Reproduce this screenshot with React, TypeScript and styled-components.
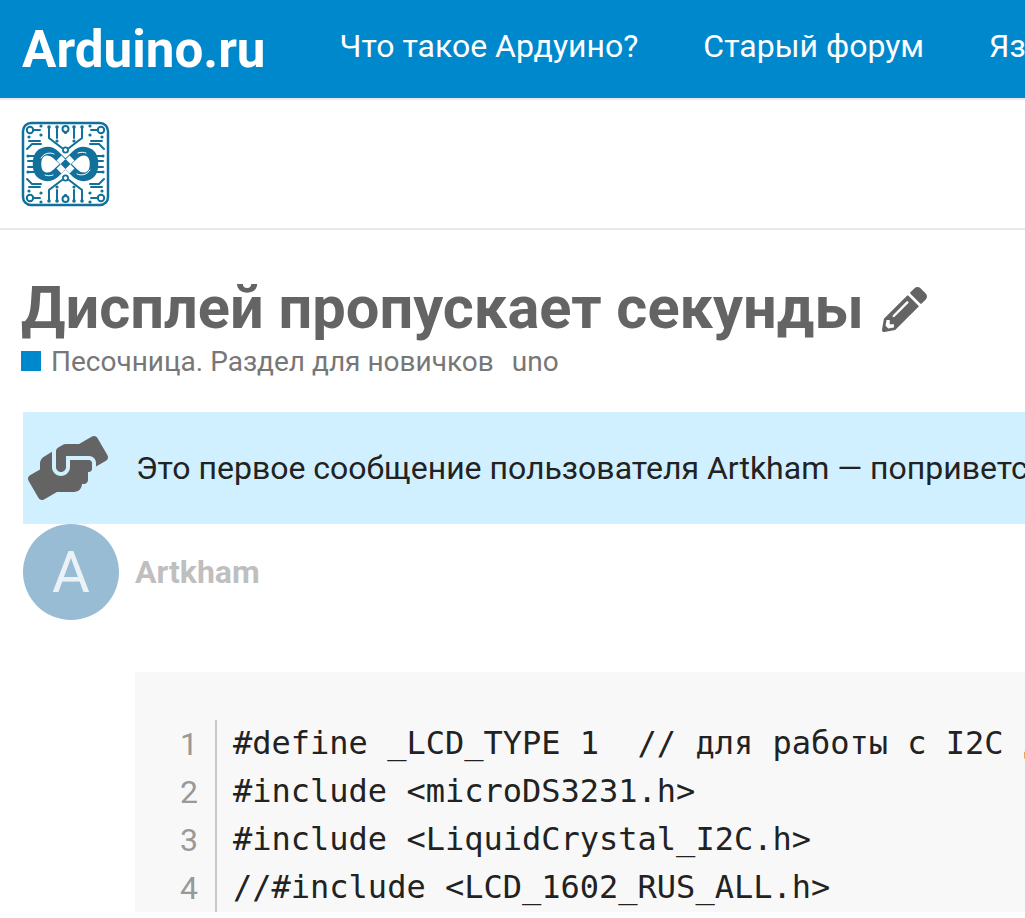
import styled, { createGlobalStyle } from 'styled-components';
import { FaHandsHelping, FaPencilAlt } from 'react-icons/fa';

const GlobalStyle = createGlobalStyle`
  html, body {
    margin: 0;
    padding: 0;
    background: #fff;
    overflow: hidden;
  }
  body {
    font-family: Roboto, "Liberation Sans", sans-serif;
  }
`;

const Page = styled.div`
  width: 1025px;
  height: 918px;
  overflow: hidden;
`;

const TopBar = styled.header`
  height: 98px;
  background: #0088cc;
  border-bottom: 2px solid #e9e9e9;
  display: flex;
  align-items: center;
  padding-left: 22px;
  white-space: nowrap;
  overflow: hidden;
`;

const Brand = styled.a`
  color: #fff;
  font-size: 51.2px;
  font-weight: 700;
  margin-right: 74px;
`;

const NavLink = styled.a`
  color: #fff;
  font-size: 32px;
  margin-right: 65px;
  position: relative;
  top: -3px;
`;

const LogoBar = styled.div`
  height: 128px;
  border-bottom: 2px solid #e9e9e9;
  display: flex;
  align-items: center;
  padding-left: 21px;
`;

const Content = styled.main`
  padding: 50px 0 0 21px;
`;

const Title = styled.h1`
  margin: 0;
  color: #646464;
  font-size: 59.6px;
  font-weight: 700;
  line-height: 56px;
  display: flex;
  align-items: center;
  gap: 18px;
  white-space: nowrap;

  svg {
    width: 45px;
    height: 45px;
    margin-top: 3px;
  }
`;

const Meta = styled.div`
  display: flex;
  align-items: center;
  margin-top: 10px;
  height: 30px;
  font-size: 28px;
  color: #777;
  white-space: nowrap;
`;

const CategoryBox = styled.span`
  width: 20px;
  height: 20px;
  background: #0088cc;
  margin-right: 10px;
`;

const Tag = styled.span`
  margin-left: 18px;
`;

const Notice = styled.div`
  margin: 36px 0 0 2px;
  height: 111px;
  background: #d1f0ff;
  border-bottom: 1px solid #e9e9e9;
  display: flex;
  align-items: center;
  color: #222;
  font-size: 32px;
  white-space: nowrap;
  overflow: hidden;

  svg {
    width: 80px;
    height: 64px;
    color: #646464;
    margin-left: 5px;
    margin-right: 28px;
    flex: none;
  }
`;

const Poster = styled.div`
  display: flex;
  align-items: center;
  margin-left: 2px;
  height: 96px;
`;

const Avatar = styled.div`
  width: 96px;
  height: 96px;
  border-radius: 50%;
  background: #97bcd4;
  color: #ebf2f7;
  font-size: 58px;
  display: flex;
  align-items: center;
  justify-content: center;
`;

const Username = styled.span`
  margin-left: 16px;
  color: #bfbfbf;
  font-size: 32px;
  font-weight: 700;
`;

const CodeBlock = styled.div`
  margin: 52px 0 0 114px;
  padding-top: 48px;
  background: #f8f8f8;
  display: grid;
  grid-template-columns: 82px 1fr;
  overflow: hidden;
`;

const Gutter = styled.div`
  border-right: 2px solid #c8c8c8;
  text-align: right;
  padding-right: 17px;
  color: #999;
  font-size: 32px;
  line-height: 48px;
`;

const Code = styled.pre`
  margin: 0;
  padding-left: 16px;
  color: #222;
  font-family: "DejaVu Sans Mono", "Liberation Mono", monospace;
  font-size: 32px;
  line-height: 48px;
  white-space: pre;
  position: relative;
  top: -1px;
`;

const lines = [
  '#define _LCD_TYPE 1  // для работы с I2C дисплеями',
  '#include <microDS3231.h>',
  '#include <LiquidCrystal_I2C.h>',
  '//#include <LCD_1602_RUS_ALL.h>',
];

// one quadrant of the circuit board, mirrored for the other three
const Quadrant = () => (
  <g>
    <circle cx="9" cy="9" r="3.2" strokeWidth="2" />
    <path d="M12 9 H19 M8 20 H19 M6 28 L11 23 H20 M7 35 H15 M7 40 H13 M28 6 V17 L41 27 M36 6 V17 M44 11 V12" strokeWidth="2" />
    <circle cx="20" cy="5" r="1.6" fill="#11719b" stroke="none" />
    <circle cx="20" cy="14" r="1.6" fill="#11719b" stroke="none" />
    <circle cx="8" cy="16" r="1.6" fill="#11719b" stroke="none" />
    <circle cx="28" cy="6" r="1.8" fill="#11719b" stroke="none" />
    <circle cx="36" cy="6" r="1.8" fill="#11719b" stroke="none" />
    <circle cx="36" cy="20" r="1.6" fill="#11719b" stroke="none" />
    <circle cx="7" cy="35" r="1.6" fill="#11719b" stroke="none" />
  </g>
);

const LogoIcon = () => (
  <svg width="90" height="86" viewBox="0 0 90 86" fill="none" stroke="#11719b" strokeLinecap="round">
    <rect x="2" y="2" width="85" height="82" rx="8" strokeWidth="2.5" />
    <Quadrant />
    <g transform="translate(89,0) scale(-1,1)">
      <Quadrant />
    </g>
    <g transform="translate(0,86) scale(1,-1)">
      <Quadrant />
    </g>
    <g transform="translate(89,86) scale(-1,-1)">
      <Quadrant />
    </g>
    <circle cx="44.5" cy="8" r="3" strokeWidth="2" />
    <circle cx="44.5" cy="78" r="3" strokeWidth="2" />
    <circle cx="44.5" cy="29" r="2.6" strokeWidth="1.8" />
    <circle cx="44.5" cy="57" r="2.6" strokeWidth="1.8" />
    <path
      d="M44.5 43 L35 34 C29 28 16 28 16 43 C16 58 29 58 35 52 L44.5 43 L54 34 C60 28 73 28 73 43 C73 58 60 58 54 52 Z"
      strokeWidth="8.5"
      strokeLinejoin="round"
    />
    <path d="M20 37 C23 32 29 31 33 33 M69 49 C66 54 60 55 56 53 M32 54 C29 55 26 55 24 54 M57 32 C60 31 63 31 65 32" stroke="#fff" strokeWidth="1" />
    <path d="M38 37 L51 50 M51 37 L38 50" stroke="#fff" strokeWidth="7" strokeLinecap="butt" />
    <path d="M44.5 38 L49.5 43 L44.5 48 L39.5 43 Z" fill="#11719b" stroke="none" />
  </svg>
);

const App = () => {
  return (
    <Page>
      <GlobalStyle />
      <TopBar>
        <Brand>Arduino.ru</Brand>
        <NavLink>Что такое Ардуино?</NavLink>
        <NavLink>Старый форум</NavLink>
        <NavLink>Язык</NavLink>
      </TopBar>
      <LogoBar>
        <LogoIcon />
      </LogoBar>
      <Content>
        <Title>
          Дисплей пропускает секунды
          <FaPencilAlt />
        </Title>
        <Meta>
          <CategoryBox />
          Песочница. Раздел для новичков
          <Tag>uno</Tag>
        </Meta>
        <Notice>
          <FaHandsHelping />
          Это первое сообщение пользователя Artkham — поприветствуйте его в нашем сообществе!
        </Notice>
        <Poster>
          <Avatar>A</Avatar>
          <Username>Artkham</Username>
        </Poster>
        <CodeBlock>
          <Gutter>
            {lines.map((_, i) => (
              <div key={i}>{i + 1}</div>
            ))}
          </Gutter>
          <Code>{lines.join('\n')}</Code>
        </CodeBlock>
      </Content>
    </Page>
  );
};

export default App;
